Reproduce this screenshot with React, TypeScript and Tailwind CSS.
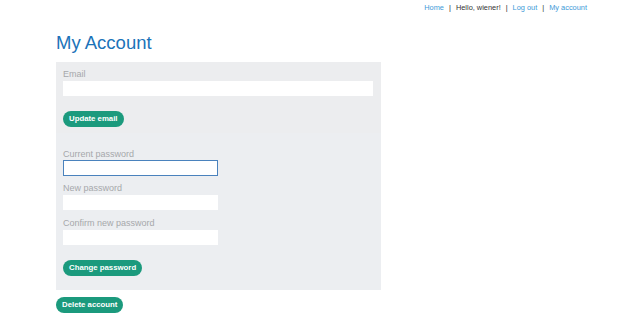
import React from "react";

const font = { fontFamily: '"Liberation Sans", Arial, sans-serif' };

function Btn({ children }: { children: React.ReactNode }) {
  return (
    <div className="flex">
      <button className="h-[16px] rounded-full bg-[#1b9a7d] px-[6px] text-[7.8px] font-bold leading-[16px] text-white">
        {children}
      </button>
    </div>
  );
}

function Field({ label, wide, focused }: { label: string; wide?: boolean; focused?: boolean }) {
  return (
    <div className="flex flex-col">
      <label className="h-[10px] text-[9px] leading-[10px] text-[#a6a8ab]">{label}</label>
      <div
        className={
          (wide ? "w-[310px] " : "w-[155px] ") +
          (focused
            ? "mt-[1px] h-[16px] border border-[#4a82bd] bg-white"
            : "mt-[2px] h-[15px] bg-white")
        }
      />
    </div>
  );
}

export default function App() {
  return (
    <div className="h-[315px] w-[640px] overflow-hidden bg-white" style={font}>
      <div className="flex justify-end pr-[53px] pt-[3px]">
        <div className="flex items-center gap-[5px] text-[7.4px] leading-[10px] text-[#333]">
          <a className="text-[#3d9ad8]">Home</a>
          <span>|</span>
          <span>Hello, wiener!</span>
          <span>|</span>
          <a className="text-[#3d9ad8]">Log out</a>
          <span>|</span>
          <a className="text-[#3d9ad8]">My account</a>
        </div>
      </div>
      <div className="pl-[56px]">
        <h1 className="mt-[18px] text-[18.5px] leading-[24px] text-[#1b73b9]">My Account</h1>
        <div className="mt-[7px] w-[325px]">
          <div className="bg-[#ecedef] px-[7px] pt-[7px] pb-[6px]">
            <Field label="Email" wide />
            <div className="mt-[15px]">
              <Btn>Update email</Btn>
            </div>
          </div>
          <div className="bg-[#eceef1] px-[7px] pt-[16px] pb-[14px]">
            <Field label="Current password" focused />
            <div className="mt-[7px]">
              <Field label="New password" />
            </div>
            <div className="mt-[8px]">
              <Field label="Confirm new password" />
            </div>
            <div className="mt-[15px]">
              <Btn>Change password</Btn>
            </div>
          </div>
        </div>
        <div className="mt-[7px]">
          <Btn>Delete account</Btn>
        </div>
      </div>
    </div>
  );
}
